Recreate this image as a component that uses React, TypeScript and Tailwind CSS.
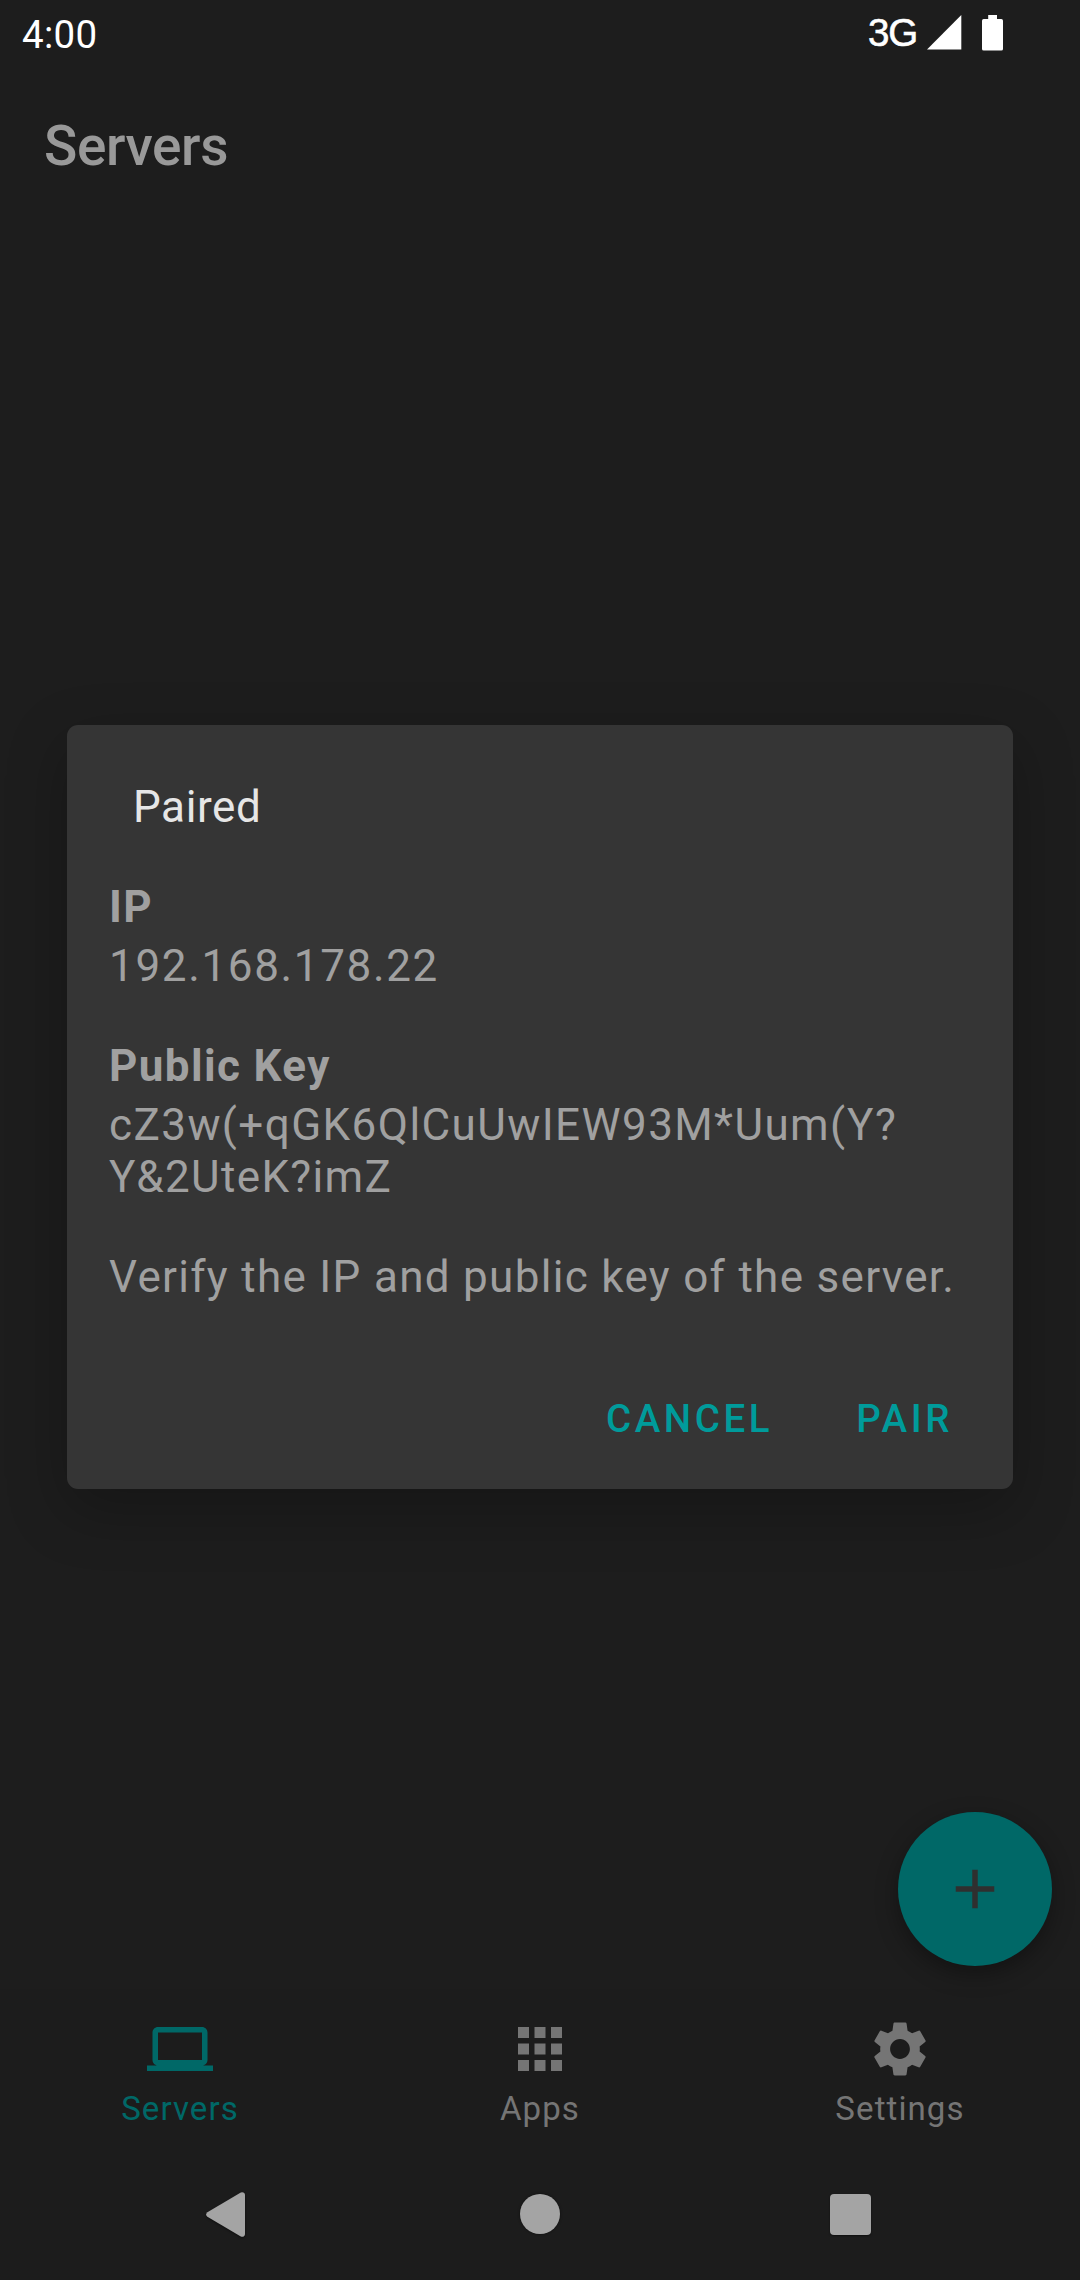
import type { ReactNode } from "react";
import { MdAdd, MdApps, MdLaptop, MdSettings } from "react-icons/md";

function StatusBar() {
  return (
    <header className="flex h-[66px] items-start justify-between pl-[22px] pr-[77px] text-white">
      <span className="mt-[12px] text-[38.5px] leading-[45px] tracking-[0.3px]">4:00</span>
      <div className="flex items-start">
        <span className="mt-[10px] mr-[10px] font-['Liberation_Sans'] text-[38.5px] leading-[46px] tracking-[-0.03em] [-webkit-text-stroke:0.6px_white]">3G</span>
        <svg className="mt-[15px] mr-[20px] h-[35px] w-[35px]" viewBox="0 0 35 35" fill="currentColor">
          <path d="M34.3 0V34.6H0Z" />
        </svg>
        <svg className="mt-[15px] h-[36px] w-[21px]" viewBox="0 0 21 36" fill="currentColor">
          <path d="M6.2 0h8.8v4h4.3A1.7 1.7 0 0 1 21 5.700V33.900a1.700 1.700 0 0 1-1.700 1.700H1.700A1.700 1.700 0 0 1 0 33.900V5.700A1.700 1.700 0 0 1 1.700 4h4.500z" />
        </svg>
      </div>
    </header>
  );
}

function Field({ label, value }: { label: string; value: ReactNode }) {
  return (
    <div className="flex flex-col gap-[7px]">
      <dt className="font-bold">{label}</dt>
      <dd>{value}</dd>
    </div>
  );
}

function PairDialog() {
  return (
    <div
      role="dialog"
      className="absolute top-[725px] left-[67px] flex h-[764px] w-[946px] flex-col rounded-[11px] bg-[#353535] pt-[56px] text-[44px] leading-[52px] tracking-[1.375px] text-[#a0a0a0] shadow-[0_20px_60px_rgba(0,0,0,0.25)]"
    >
      <h2 className="pl-[66px] tracking-[0.6px] text-[#e6e6e6]">Paired</h2>
      <dl className="mt-[48px] flex flex-col gap-[48px] pl-[42px]">
        <Field label="IP" value={<span className="tracking-[1.65px]">192.168.178.22</span>} />
        <Field
          label="Public Key"
          value={
            <>
              <span className="tracking-[1.42px]">cZ3w(+qGK6QlCuUwIEW93M*Uum(Y?</span>
              <br />
              Y&amp;2UteK?imZ
            </>
          }
        />
      </dl>
      <p className="mt-[48px] pl-[42px] tracking-[1.31px] whitespace-nowrap">Verify the IP and public key of the server.</p>
      <div className="mt-[93px] flex justify-end gap-[83px] pr-[60px] text-[38.5px] leading-[45px] font-medium tracking-[3.6px] text-[#009b9b]">
        <button>CANCEL</button>
        <button>PAIR</button>
      </div>
    </div>
  );
}

function Tab({ icon, label, active }: { icon: ReactNode; label: string; active?: boolean }) {
  return (
    <button className={`flex flex-1 flex-col items-center pt-[27px] ${active ? "text-[#006867]" : "text-[#757575]"}`}>
      {icon}
      <span className="mt-[7px] text-[33px] leading-[39px] tracking-[0.0333em]">{label}</span>
    </button>
  );
}

export default function App() {
  return (
    <div className="relative flex h-[2280px] w-[1080px] flex-col overflow-hidden bg-[#1d1d1d] font-[Roboto,sans-serif]">
      <StatusBar />
      <h1 className="mt-[48px] pl-[44px] text-[55px] leading-[64px] font-medium tracking-[-0.4px] text-[#999999]">Servers</h1>
      <main className="flex-1" />
      <nav className="flex h-[154px] bg-[#1c1c1c]">
        <Tab active icon={<MdLaptop className="size-[66px]" />} label="Servers" />
        <Tab icon={<MdApps className="size-[66px]" />} label="Apps" />
        <Tab icon={<MdSettings className="size-[66px]" />} label="Settings" />
      </nav>
      <footer className="flex h-[137px] items-start bg-[#1c1c1c] pt-[49px] pl-[206px] text-[#a4a4a4]">
        <svg className="h-[45px] w-[39px] drop-shadow-[0_1px_1px_rgba(0,0,0,0.5)]" viewBox="0 0 39 45" fill="currentColor">
          <path d="M1.400 20.200 34.800.500Q36.500-.300 38 .800 39 1.700 39 3V42Q39 43.300 38 44.200 36.500 45.300 34.800 44.500L1.400 24.800Q-1.200 22.500 1.400 20.200Z" />
        </svg>
        <span className="mt-[2px] ml-[275px] size-[40px] rounded-full bg-[#a4a4a4] shadow-[0_0_2px_1px_rgba(0,0,0,0.25)]" />
        <span className="mt-[2px] ml-[270px] size-[41px] rounded-[4px] bg-[#a4a4a4] shadow-[0_1px_2px_rgba(0,0,0,0.5)]" />
      </footer>
      <button className="absolute top-[1812px] right-[28px] flex size-[154px] items-center justify-center rounded-full bg-[#006867] text-[#2f2f2f] shadow-[0_8px_22px_rgba(0,0,0,0.35)]">
        <MdAdd className="size-[66px]" />
      </button>
      <PairDialog />
    </div>
  );
}
